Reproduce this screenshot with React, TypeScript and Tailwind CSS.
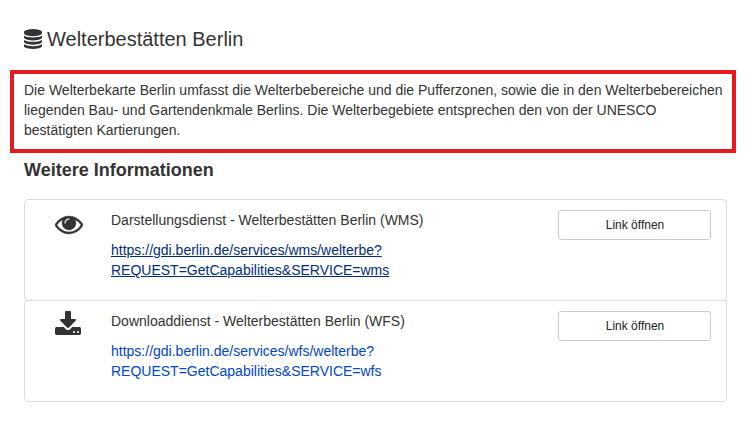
type IconProps = { className: string };

function DatabaseIcon({ className }: IconProps) {
  return (
    <svg viewBox="128 0 1536 1792" preserveAspectRatio="none" fill="currentColor" className={className} aria-hidden="true">
      <path d="M896 768q237 0 443-43t325-127v170q0 69-103 128t-280 93.5-385 34.5-385-34.5-280-93.5-103-128v-170q119 84 325 127t443 43zm0 768q237 0 443-43t325-127v170q0 69-103 128t-280 93.5-385 34.5-385-34.5-280-93.5-103-128v-170q119 84 325 127t443 43zm0-384q237 0 443-43t325-127v170q0 69-103 128t-280 93.5-385 34.5-385-34.5-280-93.5-103-128v-170q119 84 325 127t443 43zm0-1152q208 0 385 34.5t280 93.5 103 128v128q0 69-103 128t-280 93.5-385 34.5-385-34.5-280-93.5-103-128v-128q0-69 103-128t280-93.5 385-34.5z" />
    </svg>
  );
}

function EyeIcon({ className }: IconProps) {
  return (
    <svg viewBox="0 0 1792 1792" fill="currentColor" stroke="currentColor" strokeWidth="24" className={className} aria-hidden="true">
      <path d="M1664 960q-152-236-381-353 61 104 61 225 0 185-131.5 316.5t-316.5 131.5-316.5-131.5-131.5-316.5q0-121 61-225-229 117-381 353 133 205 333.5 326.5t434.5 121.5 434.5-121.5 333.5-326.5zm-720-384q0-20-14-34t-34-14q-125 0-214.5 89.5t-89.5 214.5q0 20 14 34t34 14 34-14 14-34q0-86 61-147t147-61q20 0 34-14t14-34zm848 384q0 34-20 69-140 230-376.5 368.5t-499.5 138.5-499.5-139-376.5-368q-20-35-20-69t20-69q140-229 376.5-368t499.5-139 499.5 139 376.5 368q20 35 20 69z" />
    </svg>
  );
}

function DownloadIcon({ className }: IconProps) {
  return (
    <svg viewBox="64 0 1792 1792" fill="currentColor" className={className} aria-hidden="true">
      <path d="M1344 1344q0-26-19-45t-45-19-45 19-19 45 19 45 45 19 45-19 19-45zm256 0q0-26-19-45t-45-19-45 19-19 45 19 45 45 19 45-19 19-45zm128-224v320q0 40-28 68t-68 28h-1472q-40 0-68-28t-28-68v-320q0-40 28-68t68-28h465l135 136q58 56 136 56t136-56l136-136h464q40 0 68 28t28 68zm-325-569q17 41-14 70l-448 448q-18 19-45 19t-45-19l-448-448q-31-29-14-70 17-39 59-39h256v-448q0-26 19-45t45-19h256q26 0 45 19t19 45v448h256q42 0 59 39z" />
    </svg>
  );
}

const services = [
  {
    Icon: EyeIcon,
    title: "Darstellungsdienst - Welterbestätten Berlin (WMS)",
    url: ["https://gdi.berlin.de/services/wms/welterbe?", "REQUEST=GetCapabilities&SERVICE=wms"],
    linkClass: "text-[#002b80] underline",
  },
  {
    Icon: DownloadIcon,
    title: "Downloaddienst - Welterbestätten Berlin (WFS)",
    url: ["https://gdi.berlin.de/services/wfs/welterbe?", "REQUEST=GetCapabilities&SERVICE=wfs"],
    linkClass: "text-[#0045d0]",
  },
];

export default function App() {
  return (
    <main className="h-[423px] w-[749px] overflow-hidden bg-white pt-7 font-['Liberation_Sans',Arial,sans-serif] text-sm leading-5 text-[#333]">
      <h1 className="ml-6 flex h-[22px] items-center text-xl leading-[22px]">
        <DatabaseIcon className="mr-[5px] h-5 w-[18px]" />
        Welterbestätten Berlin
      </h1>
      <p className="mt-5 ml-[10px] h-[83px] w-[726px] border-4 border-[#e8191c] pt-[6px] pl-[10px] whitespace-nowrap">
        Die Welterbekarte Berlin umfasst die Welterbebereiche und die Pufferzonen, sowie die in den Welterbebereichen
        <br />
        liegenden Bau- und Gartendenkmale Berlins. Die Welterbegebiete entsprechen den von der UNESCO
        <br />
        bestätigten Kartierungen.
      </p>
      <h2 className="mt-[7px] ml-6 text-lg leading-5 font-bold">Weitere Informationen</h2>
      <ul className="mt-[19px] ml-6 w-[703px]">
        {services.map(({ Icon, title, url, linkClass }) => (
          <li key={title} className="-mb-px flex h-[102px] rounded-[4px] border border-[#ddd] pt-[10px] pr-[15px]">
            <Icon className="ml-[30px] h-7 w-7 shrink-0" />
            <div className="ml-7 flex-1">
              <p>{title}</p>
              <a href={url.join("")} className={`mt-[10px] block ${linkClass}`}>
                {url[0]}
                <br />
                {url[1]}
              </a>
            </div>
            <button className="h-[30px] w-[153px] rounded-[3px] border border-[#ccc] pl-[1px] text-xs text-[#222]">
              Link öffnen
            </button>
          </li>
        ))}
      </ul>
    </main>
  );
}
